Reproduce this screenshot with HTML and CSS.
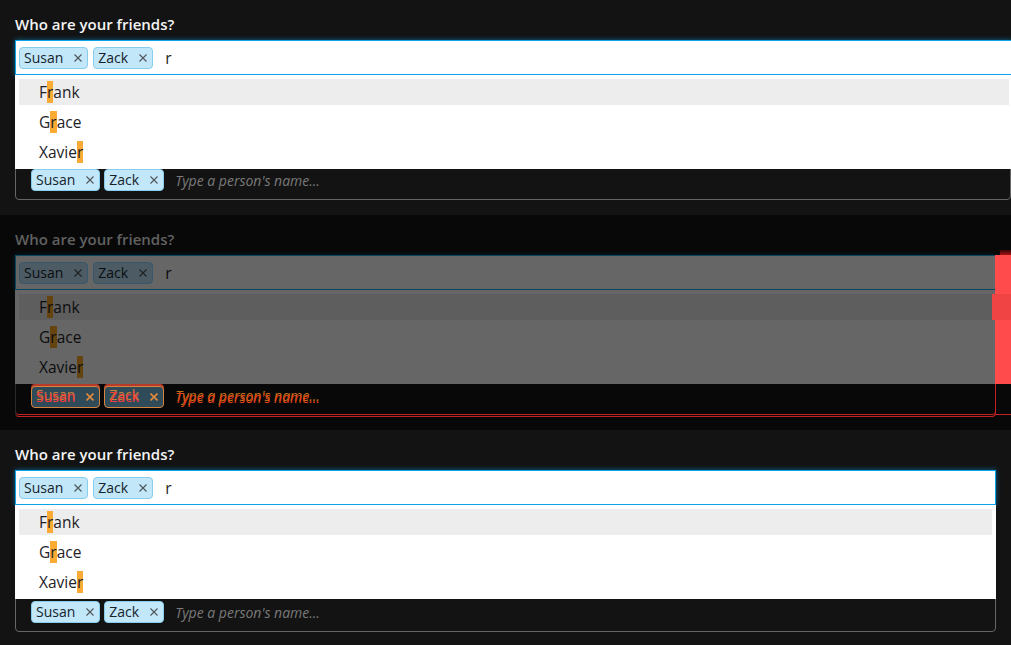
FILE: index.html
```html
<!DOCTYPE html>
<html lang="en">
<head>
<meta charset="utf-8">
<title>Tag input comparison</title>
<link rel="stylesheet" href="styles.css">
</head>
<body>
<main class="page">

  <section class="panel panel--expected">
    <div class="label">Who are your friends?</div>
    <div class="field">
      <div class="control">
        <span class="tag"><span class="tag-text">Susan</span><svg class="tag-x" viewBox="0 0 8 8"><path d="M0.5 0.5L7.5 7.5M7.5 0.5L0.5 7.5"/></svg></span>
        <span class="tag"><span class="tag-text">Zack</span><svg class="tag-x" viewBox="0 0 8 8"><path d="M0.5 0.5L7.5 7.5M7.5 0.5L0.5 7.5"/></svg></span>
        <span class="placeholder">Type a person's name...</span>
      </div>
      <div class="popover">
        <div class="input">
          <span class="tag"><span class="tag-text">Susan</span><svg class="tag-x" viewBox="0 0 8 8"><path d="M0.5 0.5L7.5 7.5M7.5 0.5L0.5 7.5"/></svg></span>
          <span class="tag"><span class="tag-text">Zack</span><svg class="tag-x" viewBox="0 0 8 8"><path d="M0.5 0.5L7.5 7.5M7.5 0.5L0.5 7.5"/></svg></span>
          <span class="query">r</span>
        </div>
        <ul class="list">
          <li class="item is-active">F<mark>r</mark>ank</li>
          <li class="item">G<mark>r</mark>ace</li>
          <li class="item">Xavie<mark>r</mark></li>
        </ul>
      </div>
    </div>
  </section>

  <section class="panel panel--diff">
    <div class="label">Who are your friends?</div>
    <div class="field">
      <div class="control">
        <span class="tag"><span class="tag-text">Susan</span><svg class="tag-x" viewBox="0 0 8 8"><path d="M0.5 0.5L7.5 7.5M7.5 0.5L0.5 7.5"/></svg></span>
        <span class="tag"><span class="tag-text">Zack</span><svg class="tag-x" viewBox="0 0 8 8"><path d="M0.5 0.5L7.5 7.5M7.5 0.5L0.5 7.5"/></svg></span>
        <span class="placeholder">Type a person's name...</span>
      </div>
      <div class="popover">
        <div class="input">
          <span class="tag"><span class="tag-text">Susan</span><svg class="tag-x" viewBox="0 0 8 8"><path d="M0.5 0.5L7.5 7.5M7.5 0.5L0.5 7.5"/></svg></span>
          <span class="tag"><span class="tag-text">Zack</span><svg class="tag-x" viewBox="0 0 8 8"><path d="M0.5 0.5L7.5 7.5M7.5 0.5L0.5 7.5"/></svg></span>
          <span class="query">r</span>
        </div>
        <ul class="list">
          <li class="item is-active">F<mark>r</mark>ank</li>
          <li class="item">G<mark>r</mark>ace</li>
          <li class="item">Xavie<mark>r</mark></li>
        </ul>
      </div>
      <div class="diff-glow"></div>
      <div class="diff-strip"><div class="diff-strip-row"></div></div>
      <div class="diff-line"></div>
    </div>
  </section>

  <section class="panel panel--actual">
    <div class="label">Who are your friends?</div>
    <div class="field">
      <div class="control">
        <span class="tag"><span class="tag-text">Susan</span><svg class="tag-x" viewBox="0 0 8 8"><path d="M0.5 0.5L7.5 7.5M7.5 0.5L0.5 7.5"/></svg></span>
        <span class="tag"><span class="tag-text">Zack</span><svg class="tag-x" viewBox="0 0 8 8"><path d="M0.5 0.5L7.5 7.5M7.5 0.5L0.5 7.5"/></svg></span>
        <span class="placeholder">Type a person's name...</span>
      </div>
      <div class="popover">
        <div class="input">
          <span class="tag"><span class="tag-text">Susan</span><svg class="tag-x" viewBox="0 0 8 8"><path d="M0.5 0.5L7.5 7.5M7.5 0.5L0.5 7.5"/></svg></span>
          <span class="tag"><span class="tag-text">Zack</span><svg class="tag-x" viewBox="0 0 8 8"><path d="M0.5 0.5L7.5 7.5M7.5 0.5L0.5 7.5"/></svg></span>
          <span class="query">r</span>
        </div>
        <ul class="list">
          <li class="item is-active">F<mark>r</mark>ank</li>
          <li class="item">G<mark>r</mark>ace</li>
          <li class="item">Xavie<mark>r</mark></li>
        </ul>
      </div>
    </div>
  </section>

</main>
</body>
</html>
```

FILE: styles.css
```css
* { box-sizing: border-box; }

html, body {
  margin: 0;
  padding: 0;
}

body {
  width: 1011px;
  height: 645px;
  overflow: hidden;
  background: #131313;
  font-family: "Open Sans", "Noto Sans", sans-serif;
}

.page {
  display: flex;
  flex-direction: column;
}

.panel {
  height: 215px;
  padding-left: 15px;
  overflow: hidden;
  display: flex;
  flex-direction: column;
  align-items: flex-start;
  background: #131313;
}

.panel--diff { background: #080808; }

.label {
  margin: 14px 0 6px;
  font-size: 15px;
  line-height: 20px;
  font-weight: 600;
  color: #f4f4f4;
  white-space: nowrap;
}

.field {
  position: relative;
  flex: none;
  width: 996px;
}

.panel--diff .field,
.panel--actual .field { width: 981px; }

/* underlying control (mostly covered by the popover) */
.control {
  margin-top: 120px;
  height: 40px;
  border: 1px solid #666;
  border-radius: 4px;
  display: flex;
  align-items: center;
  gap: 4px;
  padding: 0 15px;
}

.panel--diff .control,
.panel--actual .control {
  height: 42px;
  padding-top: 2px;
}

.placeholder {
  margin-left: 7px;
  font-size: 14px;
  font-style: italic;
  color: #7a7a7a;
  white-space: nowrap;
}

/* tags */
.tag {
  flex: none;
  display: inline-flex;
  align-items: center;
  height: 22px;
  padding: 0 5px 0 4px;
  border: 1px solid #86cdee;
  border-radius: 4px;
  background: #c1e7f9;
  color: #17232b;
  font-size: 14px;
  line-height: 20px;
}

.tag-text { margin-right: 11px; }

.tag-x {
  width: 8px;
  height: 8px;
  fill: none;
  stroke: #4f5559;
  stroke-width: 1.1;
}

/* popover: focused input + suggestion list, lying over the control */
.popover {
  position: absolute;
  top: 0;
  left: 0;
  right: -2px;
  z-index: 1;
}

.panel--diff .popover,
.panel--actual .popover { right: 0; }

.input {
  height: 35px;
  display: flex;
  align-items: center;
  gap: 5px;
  padding: 0 3px;
  background: #fff;
  border: 1px solid #0aa5e8;
  box-shadow: 0 0 5px rgba(3, 169, 244, 0.55);
}

.query {
  margin-left: 7px;
  font-size: 15.5px;
  color: #1b1f23;
}

.list {
  margin: 0;
  padding: 4px;
  list-style: none;
  background: #fff;
  display: flex;
  flex-direction: column;
  gap: 4px;
}

.item {
  height: 26px;
  display: flex;
  align-items: center;
  padding-left: 20px;
  font-size: 15.5px;
  color: #1e2227;
  white-space: pre;
}

.item.is-active { background: #ededed; }

mark {
  background: #fbab34;
  color: inherit;
}

/* diff panel: darkened copy of the actual rendering with red differences */
.panel--diff .label { color: #616161; }

.panel--diff .input {
  background: #666;
  border-color: #0b4560;
  box-shadow: 0 0 5px rgba(3, 169, 244, 0.18);
}

.panel--diff .input .tag {
  background: #4d5c64;
  border-color: #36586a;
  color: #0a0e11;
}

.panel--diff .input .tag-x { stroke: #202224; }

.panel--diff .query { color: #0b0c0e; }

.panel--diff .list { background: #666; }

.panel--diff .item { color: #0c0d0f; }

.panel--diff .item.is-active { background: #5e5e5e; }

.panel--diff mark { background: #654410; }

.panel--diff .control {
  border-color: #292929;
  border-right-color: #c42222;
  border-bottom-color: #c42222;
  box-shadow: inset 0 -1px 0 #080808, inset 0 -2px 0 #c42222;
}

.panel--diff .control .tag {
  background: #2f4a58;
  border-color: #d4843c;
  color: #ff3a3a;
  box-shadow: 0 -2px 0 #b83a2a;
  text-shadow: 0 -2px 0 #c8803a;
}

.panel--diff .control .tag-x { stroke: #e2883a; stroke-width: 1.6; }

.panel--diff .placeholder {
  color: #e6401c;
  text-shadow: 0 -2px 0 #c07414;
}

.diff-strip {
  position: absolute;
  left: 980px;
  top: 0;
  width: 40px;
  height: 129px;
  background: #ff4b4b;
  z-index: 2;
}

.diff-strip-row {
  margin: 39px 0 0 -3px;
  width: 20px;
  height: 26px;
  background: #f04444;
}

.diff-glow {
  position: absolute;
  left: 985px;
  top: -5px;
  width: 30px;
  height: 5px;
  background: linear-gradient(#3a0606, #a81212);
  z-index: 2;
}

.diff-line {
  position: absolute;
  left: 980px;
  top: 159px;
  width: 40px;
  height: 1px;
  background: #c42222;
  z-index: 2;
}
```
